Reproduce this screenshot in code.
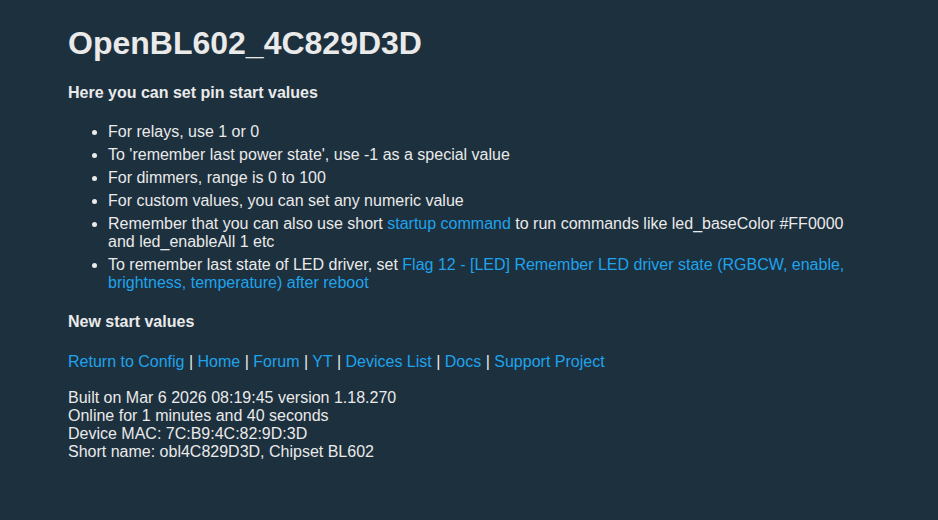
export default function App() {
  const links = ["Return to Config", "Home", "Forum", "YT", "Devices List", "Docs", "Support Project"];
  return (
    <div className="min-h-[520px] bg-[#1d303e] text-[#eaeaea] font-['Liberation_Sans',Arial,sans-serif] text-[16px] leading-[18px]">
      <div className="mx-auto w-[802px] pt-[25px]">
        <h1 className="text-[32px] leading-[37px] font-bold">OpenBL602_4C829D3D</h1>
        <h2 className="mt-[22px] font-bold">Here you can set pin start values</h2>
        <ul className="mt-[21px] list-disc pl-[40px] space-y-[5px]">
          <li>For relays, use 1 or 0</li>
          <li>To 'remember last power state', use -1 as a special value</li>
          <li>For dimmers, range is 0 to 100</li>
          <li>For custom values, you can set any numeric value</li>
          <li>
            Remember that you can also use short <a href="#" className="text-[#1fa3ec]">startup command</a> to run
            commands like led_baseColor #FF0000 and led_enableAll 1 etc
          </li>
          <li>
            To remember last state of LED driver, set{" "}
            <a href="#" className="text-[#1fa3ec]">
              Flag 12 - [LED] Remember LED driver state (RGBCW, enable, brightness, temperature) after reboot
            </a>
          </li>
        </ul>
        <h2 className="mt-[21px] font-bold">New start values</h2>
        <div className="mt-[22px]">
          {links.map((l, i) => (
            <span key={l}>
              {i > 0 && " | "}
              <a href="#" className="text-[#1fa3ec]">{l}</a>
            </span>
          ))}
        </div>
        <div className="mt-[18px]">
          <div>Built on Mar 6 2026 08:19:45 version 1.18.270</div>
          <div>Online for 1 minutes and 40 seconds</div>
          <div>Device MAC: 7C:B9:4C:82:9D:3D</div>
          <div>Short name: obl4C829D3D, Chipset BL602</div>
        </div>
      </div>
    </div>
  );
}
